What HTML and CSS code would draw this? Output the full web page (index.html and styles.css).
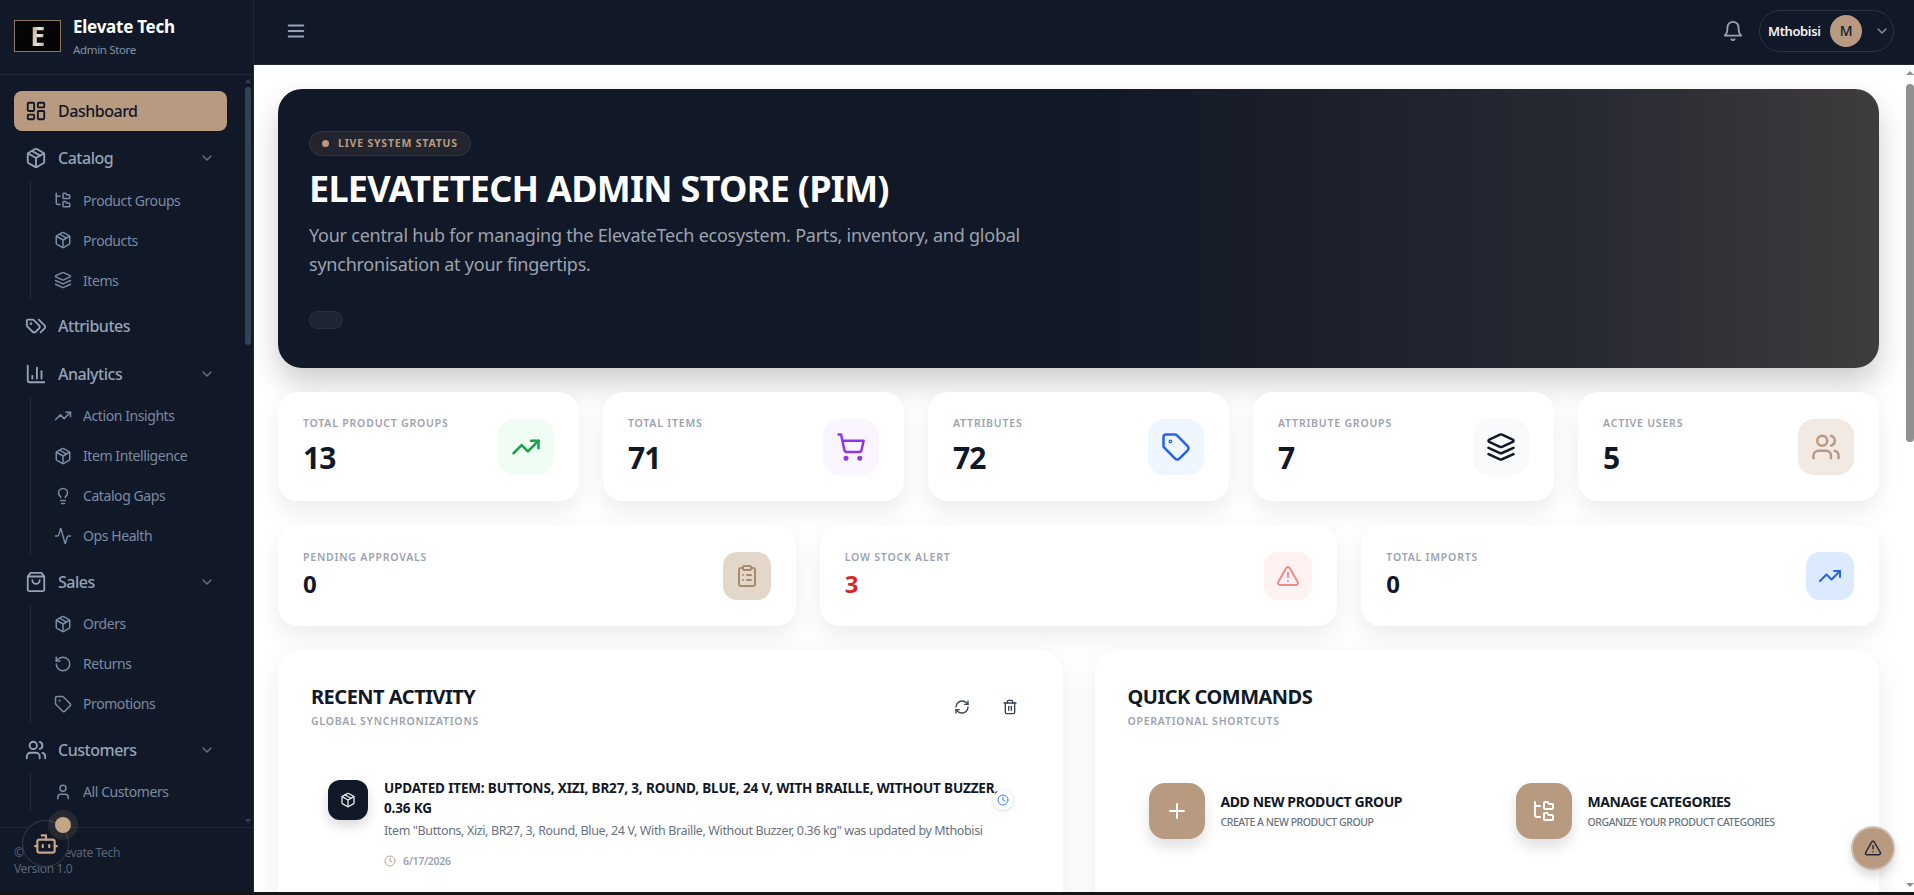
FILE: index.html
```html
<!DOCTYPE html>
<html lang="en">
<head>
    <meta charset="UTF-8">
    <meta name="viewport" content="width=device-width, initial-scale=1.0">
    <title>Elevate Tech Admin Store</title>
    <link rel="stylesheet" href="styles.css">
</head>
<body>
    <!-- icon sprite -->
    <svg class="sprite" xmlns="http://www.w3.org/2000/svg">
        <symbol id="i-dashboard" viewBox="0 0 24 24"><rect x="3" y="3" width="7" height="9" rx="1"/><rect x="14" y="3" width="7" height="5" rx="1"/><rect x="14" y="12" width="7" height="9" rx="1"/><rect x="3" y="16" width="7" height="5" rx="1"/></symbol>
        <symbol id="i-package" viewBox="0 0 24 24"><path d="m7.5 4.27 9 5.15"/><path d="M21 8a2 2 0 0 0-1-1.73l-7-4a2 2 0 0 0-2 0l-7 4A2 2 0 0 0 3 8v8a2 2 0 0 0 1 1.73l7 4a2 2 0 0 0 2 0l7-4A2 2 0 0 0 21 16Z"/><path d="m3.3 7 8.7 5 8.7-5"/><path d="M12 22V12"/></symbol>
        <symbol id="i-chevron" viewBox="0 0 24 24"><path d="m6 9 6 6 6-6"/></symbol>
        <symbol id="i-tree" viewBox="0 0 24 24"><path d="M20 10a1 1 0 0 0 1-1V6a1 1 0 0 0-1-1h-2.5a1 1 0 0 1-.8-.4l-.9-1.2A1 1 0 0 0 15 3h-2a1 1 0 0 0-1 1v5a1 1 0 0 0 1 1Z"/><path d="M20 21a1 1 0 0 0 1-1v-3a1 1 0 0 0-1-1h-2.9a1 1 0 0 1-.88-.55l-.42-.85a1 1 0 0 0-.92-.6H13a1 1 0 0 0-1 1v5a1 1 0 0 0 1 1Z"/><path d="M3 5a2 2 0 0 0 2 2h3"/><path d="M3 3v13a2 2 0 0 0 2 2h3"/></symbol>
        <symbol id="i-layers" viewBox="0 0 24 24"><path d="m12.83 2.18a2 2 0 0 0-1.66 0L2.6 6.08a1 1 0 0 0 0 1.83l8.58 3.91a2 2 0 0 0 1.66 0l8.58-3.9a1 1 0 0 0 0-1.83Z"/><path d="m22 17.65-9.17 4.16a2 2 0 0 1-1.66 0L2 17.65"/><path d="m22 12.65-9.17 4.16a2 2 0 0 1-1.66 0L2 12.65"/></symbol>
        <symbol id="i-tags" viewBox="0 0 24 24"><path d="m15 5 6.3 6.3a2.4 2.4 0 0 1 0 3.4L17 19"/><path d="M9.586 5.586A2 2 0 0 0 8.172 5H3a1 1 0 0 0-1 1v5.172a2 2 0 0 0 .586 1.414L8.29 18.29a2.426 2.426 0 0 0 3.42 0l3.58-3.58a2.426 2.426 0 0 0 0-3.42z"/><circle cx="6.5" cy="9.5" r=".5"/></symbol>
        <symbol id="i-chart" viewBox="0 0 24 24"><path d="M3 3v16a2 2 0 0 0 2 2h16"/><path d="M18 17V9"/><path d="M13 17V5"/><path d="M8 17v-3"/></symbol>
        <symbol id="i-trend" viewBox="0 0 24 24"><polyline points="22 7 13.5 15.5 8.5 10.5 2 17"/><polyline points="16 7 22 7 22 13"/></symbol>
        <symbol id="i-bulb" viewBox="0 0 24 24"><path d="M15 14c.2-1 .7-1.7 1.5-2.5 1-.9 1.5-2.2 1.5-3.5A6 6 0 0 0 6 8c0 1 .2 2.2 1.5 3.5.7.7 1.3 1.5 1.5 2.5"/><path d="M9 18h6"/><path d="M10 22h4"/></symbol>
        <symbol id="i-activity" viewBox="0 0 24 24"><path d="M22 12h-2.48a2 2 0 0 0-1.93 1.46l-2.35 8.36a.25.25 0 0 1-.48 0L9.24 2.18a.25.25 0 0 0-.48 0l-2.35 8.36A2 2 0 0 1 4.49 12H2"/></symbol>
        <symbol id="i-bag" viewBox="0 0 24 24"><path d="M6 2 3 6v14a2 2 0 0 0 2 2h14a2 2 0 0 0 2-2V6l-3-4Z"/><path d="M3 6h18"/><path d="M16 10a4 4 0 0 1-8 0"/></symbol>
        <symbol id="i-undo" viewBox="0 0 24 24"><path d="M3 12a9 9 0 1 0 9-9 9.75 9.75 0 0 0-6.74 2.74L3 8"/><path d="M3 3v5h5"/></symbol>
        <symbol id="i-tag" viewBox="0 0 24 24"><path d="M12.586 2.586A2 2 0 0 0 11.172 2H4a2 2 0 0 0-2 2v7.172a2 2 0 0 0 .586 1.414l8.704 8.704a2.426 2.426 0 0 0 3.42 0l6.58-6.58a2.426 2.426 0 0 0 0-3.42z"/><circle cx="7.5" cy="7.5" r=".5"/></symbol>
        <symbol id="i-users" viewBox="0 0 24 24"><path d="M16 21v-2a4 4 0 0 0-4-4H6a4 4 0 0 0-4 4v2"/><circle cx="9" cy="7" r="4"/><path d="M22 21v-2a4 4 0 0 0-3-3.87"/><path d="M16 3.13a4 4 0 0 1 0 7.75"/></symbol>
        <symbol id="i-user" viewBox="0 0 24 24"><path d="M19 21v-2a4 4 0 0 0-4-4H9a4 4 0 0 0-4 4v2"/><circle cx="12" cy="7" r="4"/></symbol>
        <symbol id="i-bot" viewBox="0 0 24 24"><path d="M12 8V4H8"/><rect x="4" y="8" width="16" height="12" rx="2"/><path d="M2 14h2"/><path d="M20 14h2"/><path d="M15 13v2"/><path d="M9 13v2"/></symbol>
        <symbol id="i-menu" viewBox="0 0 24 24"><path d="M4 12h16"/><path d="M4 6h16"/><path d="M4 18h16"/></symbol>
        <symbol id="i-bell" viewBox="0 0 24 24"><path d="M6 8a6 6 0 0 1 12 0c0 7 3 9 3 9H3s3-2 3-9"/><path d="M10.3 21a1.94 1.94 0 0 0 3.4 0"/></symbol>
        <symbol id="i-cart" viewBox="0 0 24 24"><circle cx="8" cy="21" r="1"/><circle cx="19" cy="21" r="1"/><path d="M2.05 2.05h2l2.66 12.42a2 2 0 0 0 2 1.58h9.78a2 2 0 0 0 1.95-1.57l1.65-7.43H5.12"/></symbol>
        <symbol id="i-clipboard" viewBox="0 0 24 24"><rect x="8" y="2" width="8" height="4" rx="1"/><path d="M16 4h2a2 2 0 0 1 2 2v14a2 2 0 0 1-2 2H6a2 2 0 0 1-2-2V6a2 2 0 0 1 2-2h2"/><path d="M12 11h4"/><path d="M12 16h4"/><path d="M8 11h.01"/><path d="M8 16h.01"/></symbol>
        <symbol id="i-alert" viewBox="0 0 24 24"><path d="m21.73 18-8-14a2 2 0 0 0-3.48 0l-8 14A2 2 0 0 0 4 21h16a2 2 0 0 0 1.73-3"/><path d="M12 9v4"/><path d="M12 17h.01"/></symbol>
        <symbol id="i-refresh" viewBox="0 0 24 24"><path d="M3 12a9 9 0 0 1 9-9 9.75 9.75 0 0 1 6.74 2.74L21 8"/><path d="M21 3v5h-5"/><path d="M21 12a9 9 0 0 1-9 9 9.75 9.75 0 0 1-6.74-2.74L3 16"/><path d="M8 16H3v5"/></symbol>
        <symbol id="i-trash" viewBox="0 0 24 24"><path d="M3 6h18"/><path d="M19 6v14c0 1-1 2-2 2H7c-1 0-2-1-2-2V6"/><path d="M8 6V4c0-1 1-2 2-2h4c1 0 2 1 2 2v2"/><path d="M10 11v6"/><path d="M14 11v6"/></symbol>
        <symbol id="i-clock" viewBox="0 0 24 24"><circle cx="12" cy="12" r="10"/><polyline points="12 6 12 12 16 14"/></symbol>
        <symbol id="i-plus" viewBox="0 0 24 24"><path d="M5 12h14"/><path d="M12 5v14"/></symbol>
    </svg>

    <div class="app">
        <aside class="sidebar">
            <div class="brand">
                <div class="brand-logo"><span>E</span></div>
                <div class="brand-text">
                    <div class="brand-name">Elevate Tech</div>
                    <div class="brand-sub">Admin Store</div>
                </div>
            </div>

            <div class="nav-wrap">
                <nav class="nav">
                    <a class="nav-item active"><svg class="ic"><use href="#i-dashboard"/></svg>Dashboard</a>

                    <div class="nav-group">
                        <a class="nav-item"><svg class="ic"><use href="#i-package"/></svg>Catalog<svg class="chev"><use href="#i-chevron"/></svg></a>
                        <div class="subnav">
                            <a class="sub-item"><svg class="ic-sm"><use href="#i-tree"/></svg>Product Groups</a>
                            <a class="sub-item"><svg class="ic-sm"><use href="#i-package"/></svg>Products</a>
                            <a class="sub-item"><svg class="ic-sm"><use href="#i-layers"/></svg>Items</a>
                        </div>
                    </div>

                    <a class="nav-item"><svg class="ic"><use href="#i-tags"/></svg>Attributes</a>

                    <div class="nav-group">
                        <a class="nav-item"><svg class="ic"><use href="#i-chart"/></svg>Analytics<svg class="chev"><use href="#i-chevron"/></svg></a>
                        <div class="subnav">
                            <a class="sub-item"><svg class="ic-sm"><use href="#i-trend"/></svg>Action Insights</a>
                            <a class="sub-item"><svg class="ic-sm"><use href="#i-package"/></svg>Item Intelligence</a>
                            <a class="sub-item"><svg class="ic-sm"><use href="#i-bulb"/></svg>Catalog Gaps</a>
                            <a class="sub-item"><svg class="ic-sm"><use href="#i-activity"/></svg>Ops Health</a>
                        </div>
                    </div>

                    <div class="nav-group">
                        <a class="nav-item"><svg class="ic"><use href="#i-bag"/></svg>Sales<svg class="chev"><use href="#i-chevron"/></svg></a>
                        <div class="subnav">
                            <a class="sub-item"><svg class="ic-sm"><use href="#i-package"/></svg>Orders</a>
                            <a class="sub-item"><svg class="ic-sm"><use href="#i-undo"/></svg>Returns</a>
                            <a class="sub-item"><svg class="ic-sm"><use href="#i-tag"/></svg>Promotions</a>
                        </div>
                    </div>

                    <div class="nav-group">
                        <a class="nav-item"><svg class="ic"><use href="#i-users"/></svg>Customers<svg class="chev"><use href="#i-chevron"/></svg></a>
                        <div class="subnav">
                            <a class="sub-item"><svg class="ic-sm"><use href="#i-user"/></svg>All Customers</a>
                        </div>
                    </div>
                </nav>
                <div class="bar bar-side">
                    <i class="arrow up"></i>
                    <i class="thumb"></i>
                    <i class="arrow down"></i>
                </div>
            </div>

            <div class="side-foot">
                <p>&copy; 2026 Elevate Tech</p>
                <p>Version 1.0</p>
                <div class="bot">
                    <svg class="bot-icon"><use href="#i-bot"/></svg>
                    <span class="bot-dot"></span>
                </div>
            </div>
        </aside>

        <div class="page">
            <header class="topbar">
                <svg class="menu-btn"><use href="#i-menu"/></svg>
                <div class="top-right">
                    <svg class="bell"><use href="#i-bell"/></svg>
                    <div class="user-pill">
                        <span class="user-name">Mthobisi</span>
                        <span class="avatar">M</span>
                        <svg class="user-chev"><use href="#i-chevron"/></svg>
                    </div>
                </div>
            </header>

            <div class="content-wrap">
                <main class="content">
                    <section class="hero">
                        <div class="hero-badge"><span class="hero-dot"></span>LIVE SYSTEM STATUS</div>
                        <h1>ELEVATETECH ADMIN STORE (PIM)</h1>
                        <p>Your central hub for managing the ElevateTech ecosystem. Parts, inventory, and global synchronisation at your fingertips.</p>
                        <div class="hero-pill"></div>
                    </section>

                    <section class="stats stats-five">
                        <div class="stat">
                            <div class="stat-text"><div class="stat-label">TOTAL PRODUCT GROUPS</div><div class="stat-num">13</div></div>
                            <div class="stat-icon green"><svg><use href="#i-trend"/></svg></div>
                        </div>
                        <div class="stat">
                            <div class="stat-text"><div class="stat-label">TOTAL ITEMS</div><div class="stat-num">71</div></div>
                            <div class="stat-icon purple"><svg><use href="#i-cart"/></svg></div>
                        </div>
                        <div class="stat">
                            <div class="stat-text"><div class="stat-label">ATTRIBUTES</div><div class="stat-num">72</div></div>
                            <div class="stat-icon blue"><svg><use href="#i-tag"/></svg></div>
                        </div>
                        <div class="stat">
                            <div class="stat-text"><div class="stat-label">ATTRIBUTE GROUPS</div><div class="stat-num">7</div></div>
                            <div class="stat-icon gray"><svg><use href="#i-layers"/></svg></div>
                        </div>
                        <div class="stat">
                            <div class="stat-text"><div class="stat-label">ACTIVE USERS</div><div class="stat-num">5</div></div>
                            <div class="stat-icon tan"><svg><use href="#i-users"/></svg></div>
                        </div>
                    </section>

                    <section class="stats stats-three">
                        <div class="stat small">
                            <div class="stat-text"><div class="stat-label">PENDING APPROVALS</div><div class="stat-num">0</div></div>
                            <div class="stat-icon tan-dark"><svg><use href="#i-clipboard"/></svg></div>
                        </div>
                        <div class="stat small">
                            <div class="stat-text"><div class="stat-label">LOW STOCK ALERT</div><div class="stat-num red">3</div></div>
                            <div class="stat-icon pink"><svg><use href="#i-alert"/></svg></div>
                        </div>
                        <div class="stat small">
                            <div class="stat-text"><div class="stat-label">TOTAL IMPORTS</div><div class="stat-num">0</div></div>
                            <div class="stat-icon sky"><svg><use href="#i-trend"/></svg></div>
                        </div>
                    </section>

                    <section class="panels">
                        <div class="panel">
                            <div class="panel-head">
                                <div>
                                    <h2>RECENT ACTIVITY</h2>
                                    <div class="panel-sub">GLOBAL SYNCHRONIZATIONS</div>
                                </div>
                                <div class="panel-tools">
                                    <svg><use href="#i-refresh"/></svg>
                                    <svg><use href="#i-trash"/></svg>
                                </div>
                            </div>
                            <div class="activity">
                                <div class="activity-icon"><svg><use href="#i-package"/></svg></div>
                                <div class="activity-body">
                                    <div class="activity-title">UPDATED ITEM: BUTTONS, XIZI, BR27, 3, ROUND, BLUE, 24 V, WITH BRAILLE, WITHOUT BUZZER, 0.36 KG</div>
                                    <div class="activity-desc">Item "Buttons, Xizi, BR27, 3, Round, Blue, 24 V, With Braille, Without Buzzer, 0.36 kg" was updated by Mthobisi</div>
                                    <div class="activity-date"><svg><use href="#i-clock"/></svg>6/17/2026</div>
                                </div>
                                <div class="activity-clock"><svg><use href="#i-clock"/></svg></div>
                            </div>
                        </div>

                        <div class="panel">
                            <div class="panel-head">
                                <div>
                                    <h2>QUICK COMMANDS</h2>
                                    <div class="panel-sub">OPERATIONAL SHORTCUTS</div>
                                </div>
                            </div>
                            <div class="commands">
                                <div class="command">
                                    <div class="command-icon"><svg><use href="#i-plus"/></svg></div>
                                    <div>
                                        <div class="command-title">ADD NEW PRODUCT GROUP</div>
                                        <div class="command-sub">CREATE A NEW PRODUCT GROUP</div>
                                    </div>
                                </div>
                                <div class="command">
                                    <div class="command-icon"><svg><use href="#i-tree"/></svg></div>
                                    <div>
                                        <div class="command-title">MANAGE CATEGORIES</div>
                                        <div class="command-sub">ORGANIZE YOUR PRODUCT CATEGORIES</div>
                                    </div>
                                </div>
                            </div>
                        </div>
                    </section>
                </main>
                <div class="bar bar-main">
                    <i class="arrow up"></i>
                    <i class="thumb"></i>
                    <i class="arrow down"></i>
                </div>
                <div class="fab"><svg><use href="#i-alert"/></svg></div>
            </div>
        </div>
    </div>
</body>
</html>
```

FILE: styles.css
```css
/* Reset */
* {
    box-sizing: border-box;
    margin: 0;
    padding: 0;
    letter-spacing: -0.03em;
}

body {
    font-family: "Noto Sans", "Open Sans", sans-serif;
    background-color: #161616;
    color: #111827;
    height: 100vh;
    overflow: hidden;
}

.sprite {
    display: none;
}

/* all icons are stroked line icons */
svg {
    fill: none;
    stroke: currentColor;
    stroke-width: 2;
    stroke-linecap: round;
    stroke-linejoin: round;
    flex-shrink: 0;
}

.app {
    display: flex;
    height: 892px;
    overflow: hidden;
}

/* Drawn scrollbars */
.bar {
    position: absolute;
    top: 0;
    right: 0;
    bottom: 0;
    display: flex;
    flex-direction: column;
    align-items: center;
}

.thumb {
    display: block;
    width: 100%;
    border-radius: 4px;
}

.arrow {
    display: block;
    width: 0;
    height: 0;
    border-left: 3px solid transparent;
    border-right: 3px solid transparent;
}

.arrow.up {
    border-bottom: 4px solid;
}

.arrow.down {
    border-top: 4px solid;
    margin-top: auto;
}

.bar-side {
    right: 2px;
    width: 6px;
    color: #334155;
    padding: 4px 0;
}

.bar-side .thumb {
    height: 258px;
    margin-top: 4px;
    background-color: #334155;
}

.bar-main {
    width: 8px;
    color: #8f8f8f;
    padding: 6px 0 5px;
}

.bar-main .arrow {
    border-left-width: 4px;
    border-right-width: 4px;
}

.bar-main .thumb {
    height: 358px;
    margin-top: 9px;
    background-color: #8f8f8f;
}

/* Sidebar */
.sidebar {
    width: 254px;
    flex-shrink: 0;
    display: flex;
    flex-direction: column;
    background-color: #111827;
    border-right: 1px solid #1f2937;
}

.brand {
    height: 75px;
    flex-shrink: 0;
    display: flex;
    align-items: center;
    gap: 12px;
    padding: 0 14px 3px;
    border-bottom: 1px solid #1f2937;
}

.brand-logo {
    width: 47px;
    height: 32px;
    display: flex;
    align-items: center;
    justify-content: center;
    background-color: #050505;
    border: 1px solid #8d7763;
}

.brand-logo span {
    font-size: 27px;
    font-weight: 700;
    line-height: 1;
    background: linear-gradient(100deg, #a08a77, #efe7df 55%, #b89a80);
    -webkit-background-clip: text;
    background-clip: text;
    color: transparent;
}

.brand-text {
    padding-top: 3px;
}

.brand-name {
    font-size: 17px;
    font-weight: 700;
    letter-spacing: -0.015em;
    color: #fff;
    line-height: 22px;
}

.brand-sub {
    font-size: 11.5px;
    color: #8492a6;
    line-height: 16px;
    margin-top: 4px;
}

.nav-wrap {
    position: relative;
    flex: 1;
    min-height: 0;
}

.nav {
    height: 100%;
    overflow: hidden;
    padding: 15.5px 26px 0 14px;
    display: flex;
    flex-direction: column;
    gap: 7.5px;
}

.nav-item {
    height: 40px;
    flex-shrink: 0;
    display: flex;
    align-items: center;
    gap: 11px;
    padding-left: 11px;
    padding-right: 12px;
    border-radius: 8px;
    font-size: 16px;
    font-weight: 500;
    color: #94a3b8;
}

.nav-item .ic {
    width: 22px;
    height: 22px;
}

.nav-item.active {
    background-color: #b89a80;
    color: #111827;
}

.chev {
    width: 16px;
    height: 16px;
    margin-left: auto;
    color: #64748b;
}

.nav-group {
    flex-shrink: 0;
}

.subnav {
    margin: 2px 0 -1.5px 16px;
    padding-left: 23px;
    border-left: 1px solid #1f2937;
}

.sub-item {
    height: 40px;
    display: flex;
    align-items: center;
    gap: 11px;
    font-size: 14px;
    color: #7a8ba3;
}

.ic-sm {
    width: 18px;
    height: 18px;
}

.side-foot {
    position: relative;
    height: 65px;
    flex-shrink: 0;
    padding: 17px 14px 0;
    border-top: 1px solid #1f2937;
    background-color: #111827;
    font-size: 12px;
    line-height: 16px;
    color: #5b6779;
}

/* floating assistant button */
.bot {
    position: absolute;
    left: 22px;
    top: -8px;
    width: 47px;
    height: 47px;
    display: flex;
    align-items: center;
    justify-content: center;
    border-radius: 50%;
    border: 1.5px solid #3a3d44;
    background-color: #111827;
    color: #c5a587;
}

.bot-icon {
    width: 26px;
    height: 26px;
}

.bot-dot {
    position: absolute;
    left: 32px;
    top: -4px;
    width: 16px;
    height: 16px;
    border-radius: 50%;
    background-color: #c5a587;
    box-shadow: 0 0 0 7px rgba(197, 165, 135, 0.12);
}

/* Main area */
.page {
    flex: 1;
    min-width: 0;
    display: flex;
    flex-direction: column;
}

.topbar {
    height: 65px;
    flex-shrink: 0;
    display: flex;
    align-items: center;
    justify-content: space-between;
    padding: 0 20px 3px 31px;
    background-color: #111827;
    border-bottom: 1px solid #1f2937;
}

.menu-btn {
    width: 22px;
    height: 22px;
    color: #94a3b8;
}

.top-right {
    display: flex;
    align-items: center;
    gap: 15px;
}

.bell {
    width: 22px;
    height: 22px;
    color: #9ca3af;
}

.user-pill {
    width: 135px;
    height: 42px;
    display: flex;
    align-items: center;
    padding: 0 3px 0 8px;
    border: 1px solid #2b3443;
    border-radius: 21px;
}

.user-name {
    font-size: 13px;
    font-weight: 600;
    color: #f3f4f6;
    flex: 1;
}

.avatar {
    width: 32px;
    height: 32px;
    display: flex;
    align-items: center;
    justify-content: center;
    border-radius: 50%;
    background-color: #b89a80;
    color: #111827;
    font-size: 14px;
    font-weight: 500;
    margin-right: 12px;
}

.user-chev {
    width: 16px;
    height: 16px;
    color: #8492a6;
}

.content-wrap {
    position: relative;
    flex: 1;
    min-height: 0;
}

.content {
    height: 100%;
    overflow: hidden;
    background-color: #fff;
    padding: 24px 35px 24px 24px;
}

/* Hero */
.hero {
    height: 279px;
    padding: 41px 32px 0 31px;
    border-radius: 24px;
    background: linear-gradient(90deg, #111827 50%, #1b1f2a 64%, #282a33 82%, #38363a 95%, #3f3c3d 100%);
    box-shadow: 0 15px 30px rgba(0, 0, 0, 0.2);
}

.hero-badge {
    display: inline-flex;
    align-items: center;
    gap: 9px;
    height: 25px;
    padding: 0 12px 2px;
    border: 1px solid #33363f;
    border-radius: 13px;
    background-color: #23252e;
    font-size: 10.5px;
    font-weight: 700;
    letter-spacing: 0.8px;
    color: #b89a80;
}

.hero-dot {
    width: 7px;
    height: 7px;
    margin-top: 2px;
    border-radius: 50%;
    background-color: #b89a80;
}

.hero h1 {
    margin-top: 11px;
    font-size: 36px;
    line-height: 44px;
    font-weight: 700;
    letter-spacing: -0.02em;
    color: #fff;
}

.hero p {
    margin-top: 10px;
    max-width: 740px;
    font-size: 18px;
    line-height: 29px;
    letter-spacing: -0.013em;
    color: #9ca3af;
}

.hero-pill {
    width: 34px;
    height: 18px;
    margin-top: 32px;
    border: 1px solid #293140;
    border-radius: 9px;
    background-color: #1d2531;
}

/* Stat cards */
.stats {
    display: grid;
    gap: 24px;
    margin-top: 24px;
}

.stats-five {
    grid-template-columns: repeat(5, 1fr);
}

.stats-three {
    grid-template-columns: repeat(3, 1fr);
}

.stat {
    height: 109px;
    display: flex;
    align-items: center;
    justify-content: space-between;
    padding: 0 25px;
    border-radius: 20px;
    background-color: #fff;
    box-shadow: 0 10px 25px rgba(0, 0, 0, 0.08);
}

.stat.small {
    height: 101px;
}

.stat-text {
    padding-bottom: 2px;
}

.small .stat-text {
    padding-bottom: 3px;
}

.stat-label {
    font-size: 10.5px;
    font-weight: 600;
    letter-spacing: 0.8px;
    color: #9ca3af;
    line-height: 14px;
}

.stat-num {
    margin-top: 10px;
    font-size: 30px;
    font-weight: 700;
    line-height: 36px;
    color: #111827;
}

.small .stat-num {
    margin-top: 5px;
    font-size: 24px;
    line-height: 30px;
}

.stat-num.red {
    color: #dc2626;
}

.stat-icon {
    width: 56px;
    height: 56px;
    display: flex;
    align-items: center;
    justify-content: center;
    border-radius: 16px;
}

.small .stat-icon {
    width: 48px;
    height: 48px;
    border-radius: 14px;
}

.stat-icon svg {
    width: 30px;
    height: 30px;
}

.small .stat-icon svg {
    width: 24px;
    height: 24px;
}

.green { background-color: #f0fdf4; color: #16a34a; }
.purple { background-color: #faf5ff; color: #9333ea; }
.blue { background-color: #eff6ff; color: #2563eb; }
.gray { background-color: #f9fafb; color: #111827; }
.tan { background-color: #f1e9e2; color: #b89a80; }
.tan-dark { background-color: #e3d7c9; color: #a98a6e; }
.pink { background-color: #fef2f2; color: #f08a8a; }
.sky { background-color: #dbeafe; color: #2563eb; }

/* Panels */
.panels {
    display: grid;
    grid-template-columns: 1fr 1fr;
    gap: 32px;
    margin-top: 24px;
}

.panel {
    min-height: 400px;
    padding: 34px 34px 34px 33px;
    border-radius: 24px;
    background-color: #fff;
    box-shadow: 0 10px 30px rgba(0, 0, 0, 0.08);
}

.panel-head {
    display: flex;
    justify-content: space-between;
    align-items: center;
}

.panel h2 {
    font-size: 20px;
    font-weight: 700;
    line-height: 26px;
    letter-spacing: -0.025em;
    color: #111827;
}

.panel-sub {
    margin-top: 3px;
    font-size: 10.5px;
    font-weight: 600;
    letter-spacing: 0.75px;
    line-height: 16px;
    color: #9ca3af;
}

.panel-tools {
    display: flex;
    gap: 32px;
    padding-right: 11px;
    color: #374151;
}

.panel-tools svg {
    width: 16px;
    height: 16px;
}

.activity {
    position: relative;
    display: flex;
    gap: 16px;
    margin: 51px 16px 0 17px;
}

.activity-icon {
    width: 40px;
    height: 40px;
    flex-shrink: 0;
    display: flex;
    align-items: center;
    justify-content: center;
    border-radius: 12px;
    background-color: #111827;
    color: #e5e7eb;
    box-shadow: 0 6px 12px rgba(0, 0, 0, 0.15);
}

.activity-icon svg {
    width: 16px;
    height: 16px;
}

.activity-body {
    margin-top: -2px;
}

.activity-title {
    font-size: 13.5px;
    font-weight: 700;
    line-height: 20px;
    letter-spacing: -0.15px;
    color: #111827;
}

.activity-desc {
    margin-top: 3px;
    font-size: 12.5px;
    line-height: 20px;
    color: #6b7280;
}

.activity-date {
    display: flex;
    align-items: center;
    gap: 7px;
    margin-top: 12px;
    font-size: 10.5px;
    font-weight: 600;
    line-height: 16px;
    color: #9ca3af;
}

.activity-date svg {
    width: 12px;
    height: 12px;
    color: #c5a587;
}

.activity-clock {
    position: absolute;
    right: 0;
    top: 10px;
    width: 20px;
    height: 20px;
    display: flex;
    align-items: center;
    justify-content: center;
    border-radius: 50%;
    background-color: #fff;
    color: #3b82f6;
    box-shadow: 0 1px 4px rgba(0, 0, 0, 0.15);
}

.activity-clock svg {
    width: 12px;
    height: 12px;
}

.commands {
    display: grid;
    grid-template-columns: 367px 1fr;
    margin: 54px 0 0 21px;
}

.command {
    display: flex;
    align-items: center;
    gap: 16px;
}

.command-icon {
    width: 56px;
    height: 56px;
    flex-shrink: 0;
    display: flex;
    align-items: center;
    justify-content: center;
    border-radius: 16px;
    background-color: #b89a80;
    color: #fff;
    box-shadow: 0 8px 14px rgba(0, 0, 0, 0.12);
}

.command-icon svg {
    width: 24px;
    height: 24px;
}

.command-title {
    font-size: 14px;
    font-weight: 700;
    line-height: 20px;
    color: #111827;
}

.command-sub {
    font-size: 10.5px;
    font-weight: 500;
    line-height: 16px;
    letter-spacing: -0.45px;
    margin-top: 2px;
    color: #6b7280;
}

/* floating alert button */
.fab {
    position: absolute;
    right: 21px;
    bottom: 24px;
    width: 40px;
    height: 40px;
    display: flex;
    align-items: center;
    justify-content: center;
    border-radius: 50%;
    background-color: #b89a80;
    color: #1f2937;
    box-shadow: 0 0 0 2px rgba(184, 154, 128, 0.6), 0 6px 12px rgba(0, 0, 0, 0.2);
}

.fab svg {
    width: 18px;
    height: 18px;
}
```
